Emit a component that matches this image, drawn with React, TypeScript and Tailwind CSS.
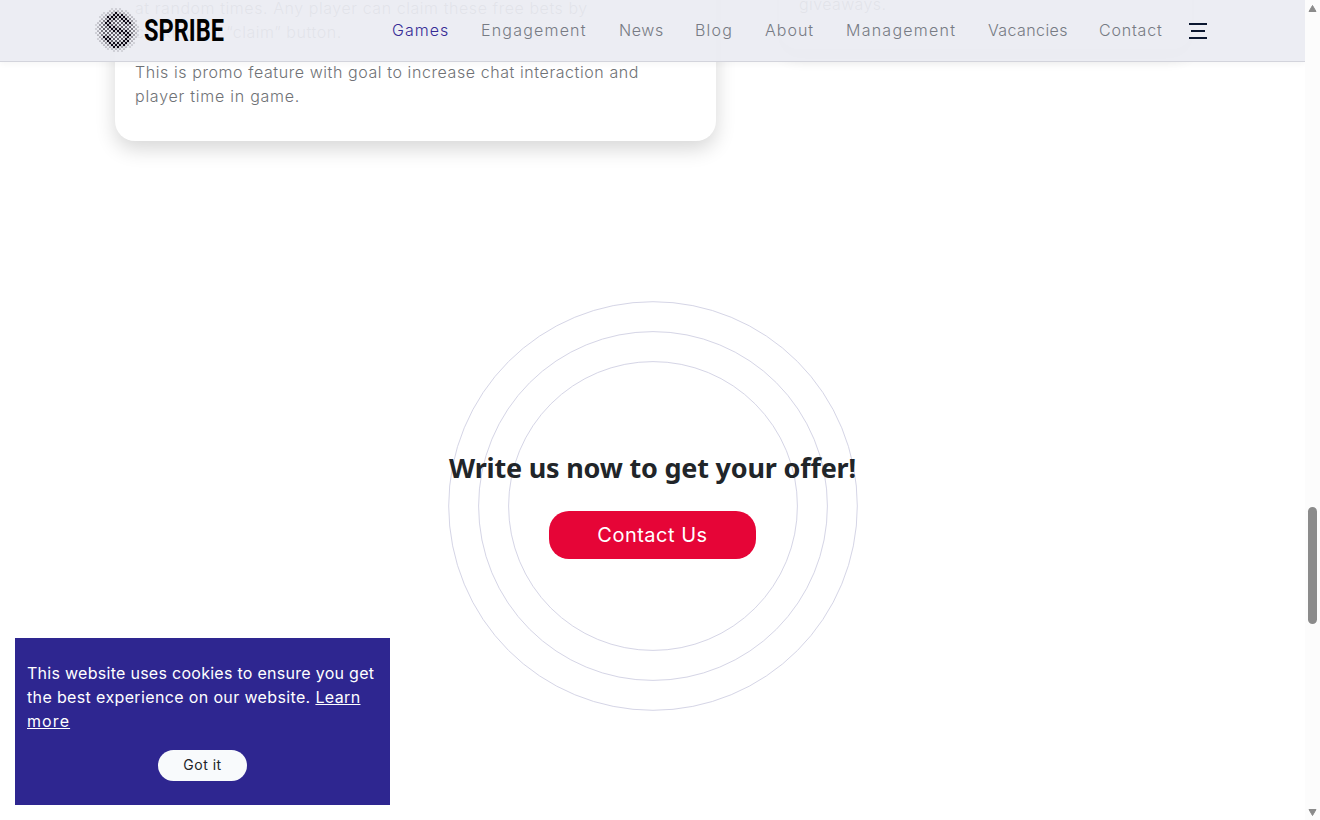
import React from 'react';

const navItems = [
  { label: 'Games', className: 'w-[57px] tracking-[1px] text-[#362b96]' },
  { label: 'Engagement', className: 'w-[106px] tracking-[1.2px]' },
  { label: 'News', className: 'w-[44px] tracking-[0.6px]' },
  { label: 'Blog', className: 'w-[38px] tracking-[1.2px]' },
  { label: 'About', className: 'w-[49px] tracking-[1px]' },
  { label: 'Management', className: 'w-[110px] tracking-[1.25px]' },
  { label: 'Vacancies', className: 'w-[79px] tracking-[0.4px]' },
  { label: 'Contact', className: 'w-[64px] tracking-[0.8px]' },
];

// centre line of the S inside the halftone disc
const sLine = [
  [33, 14],
  [28, 8.5],
  [21, 7.5],
  [14, 11],
  [13, 16],
  [16, 20],
  [22, 22],
  [30, 24],
  [33, 28],
  [31, 34],
  [24, 37.5],
  [16, 36],
  [11, 30],
];

function distanceToS(x: number, y: number) {
  let min = Infinity;
  for (let i = 0; i < sLine.length - 1; i++) {
    const [ax, ay] = sLine[i];
    const dx = sLine[i + 1][0] - ax;
    const dy = sLine[i + 1][1] - ay;
    const t = Math.max(0, Math.min(1, ((x - ax) * dx + (y - ay) * dy) / (dx * dx + dy * dy)));
    min = Math.min(min, Math.hypot(x - ax - t * dx, y - ay - t * dy));
  }
  return min;
}

function getDots() {
  const dots: { x: number; y: number; r: number; o: number }[] = [];
  for (let row = 0; row <= 21; row++) {
    for (let col = 0; col <= 11; col++) {
      const x = 1 + col * 4 + (row % 2) * 2;
      const y = 1 + row * 2;
      const d = Math.hypot(x - 22, y - 22);
      if (d > 21.8) continue;
      const onS = distanceToS(x, y) < 2.6;
      const fade = Math.max(0, d - 13);
      dots.push({
        x,
        y,
        r: onS ? 1.2 : 0.95 - fade * 0.015,
        o: onS ? 1 : 0.85 - fade * 0.07,
      });
    }
  }
  return dots;
}

function Logo() {
  return (
    <a href="#" className="flex items-center text-black">
      <svg width="44" height="44" viewBox="0 0 44 44">
        {getDots().map((dot, i) => (
          <circle key={i} cx={dot.x} cy={dot.y} r={dot.r} opacity={dot.o} fill="#090411" />
        ))}
      </svg>
      <span className="mt-0.5 ml-[5px] w-20 origin-left scale-x-[0.76] font-[Roboto] text-[31px] leading-[44px] font-bold">
        SPRIBE
      </span>
    </a>
  );
}

function Header() {
  return (
    <header className="absolute inset-x-0 top-0 z-10 flex h-[62px] items-center border-b border-[#d3d4dc] bg-[#ebecf2]/93 pb-px pl-[95px] shadow-[0_2px_6px_rgba(0,0,0,0.04)]">
      <Logo />
      <nav className="ml-[168px] flex gap-8 text-base font-[350] whitespace-nowrap text-[#777b84]">
        {navItems.map((item) => (
          <a key={item.label} href="#" className={item.className}>
            {item.label}
          </a>
        ))}
      </nav>
      <button className="mt-px ml-[26px] flex flex-col items-center gap-[5px]">
        <span className="h-0.5 w-[18px] bg-[#0b1730]" />
        <span className="h-0.5 w-[14px] bg-[#0b1730]" />
        <span className="h-0.5 w-[18px] bg-[#0b1730]" />
      </button>
    </header>
  );
}

function Cards() {
  return (
    <section className="-mt-10 flex h-[181px] items-start gap-[63px] pl-[115px] text-base leading-6 font-[350] whitespace-nowrap text-[#6f7276]">
      <div className="h-[181px] w-[601px] rounded-[20px] bg-white px-5 pt-9 shadow-[0_8px_20px_rgba(0,0,0,0.16)]">
        <p className="mb-4 tracking-[0.56px]">
          at random times. Any player can claim these free bets by
          <br />
          clicking on “claim” button.
        </p>
        <p className="tracking-[0.58px]">
          This is promo feature with goal to increase chat interaction and
          <br />
          <span className="tracking-[0.75px]">player time in game.</span>
        </p>
      </div>
      <div className="h-[89px] w-[413px] rounded-[20px] bg-white px-5 pt-8 shadow-[0_8px_16px_rgba(0,0,0,0.12)]">
        <p className="tracking-[0.4px]">giveaways.</p>
      </div>
    </section>
  );
}

function Offer() {
  return (
    <section className="mt-[160px] grid w-[1305px] justify-items-center">
      <svg width="410" height="410" viewBox="0 0 410 410" fill="none" stroke="#d5d5e6" className="col-start-1 row-start-1 ml-px">
        <circle cx="205" cy="205" r="204.3" />
        <circle cx="205" cy="205" r="174.4" />
        <circle cx="205" cy="205" r="144.4" />
      </svg>
      <div className="col-start-1 row-start-1 flex flex-col items-center pt-[149px]">
        <h2 className="font-['Noto_Sans'] text-[27px] leading-9 font-bold tracking-[-0.2px] whitespace-nowrap text-[#212529]">
          Write us now to get your offer!
        </h2>
        <button className="mt-[25px] h-12 w-[207px] rounded-[20px] bg-[#e60537] text-xl tracking-[0.5px] text-white">
          Contact Us
        </button>
      </div>
    </section>
  );
}

function CookieBanner() {
  return (
    <div className="absolute bottom-[15px] left-[15px] flex h-[167px] w-[375px] flex-col items-center bg-[#2e2690] px-3 pt-[23px]">
      <p className="w-full text-base leading-6 tracking-[0.28px] whitespace-nowrap text-white">
        This website uses cookies to ensure you get
        <br />
        <span className="tracking-[0.36px]">
          the best experience on our website.{' '}
          <a href="#" className="underline">
            Learn
            <br />
            <span className="tracking-[1.1px]">more</span>
          </a>
        </span>
      </p>
      <button className="mt-[17px] h-[31px] w-[89px] rounded-full bg-[#f8fafc] pb-px text-sm tracking-[0.5px] text-[#212529]">
        Got it
      </button>
    </div>
  );
}

function Scrollbar() {
  return (
    <div className="flex h-full w-[15px] flex-col items-center bg-[#fcfcfc]">
      <svg width="9" height="7" viewBox="0 0 9 7" className="mt-[5px]">
        <path d="M4.5 0.5 8 6.5H1Z" fill="#8b8b8b" stroke="#8b8b8b" strokeLinejoin="round" />
      </svg>
      <div className="mt-[495px] h-[117px] w-[9px] rounded-full bg-[#8b8b8b]" />
      <svg width="9" height="7" viewBox="0 0 9 7" className="mt-auto mb-[4px]">
        <path d="M4.5 6.5 8 0.5H1Z" fill="#8b8b8b" stroke="#8b8b8b" strokeLinejoin="round" />
      </svg>
    </div>
  );
}

export default function App() {
  return (
    <div className="flex h-[820px] w-[1320px] overflow-hidden bg-white font-[Inter]">
      <main className="relative h-full w-[1305px] overflow-hidden">
        <Header />
        <Cards />
        <Offer />
        <CookieBanner />
      </main>
      <Scrollbar />
    </div>
  );
}
